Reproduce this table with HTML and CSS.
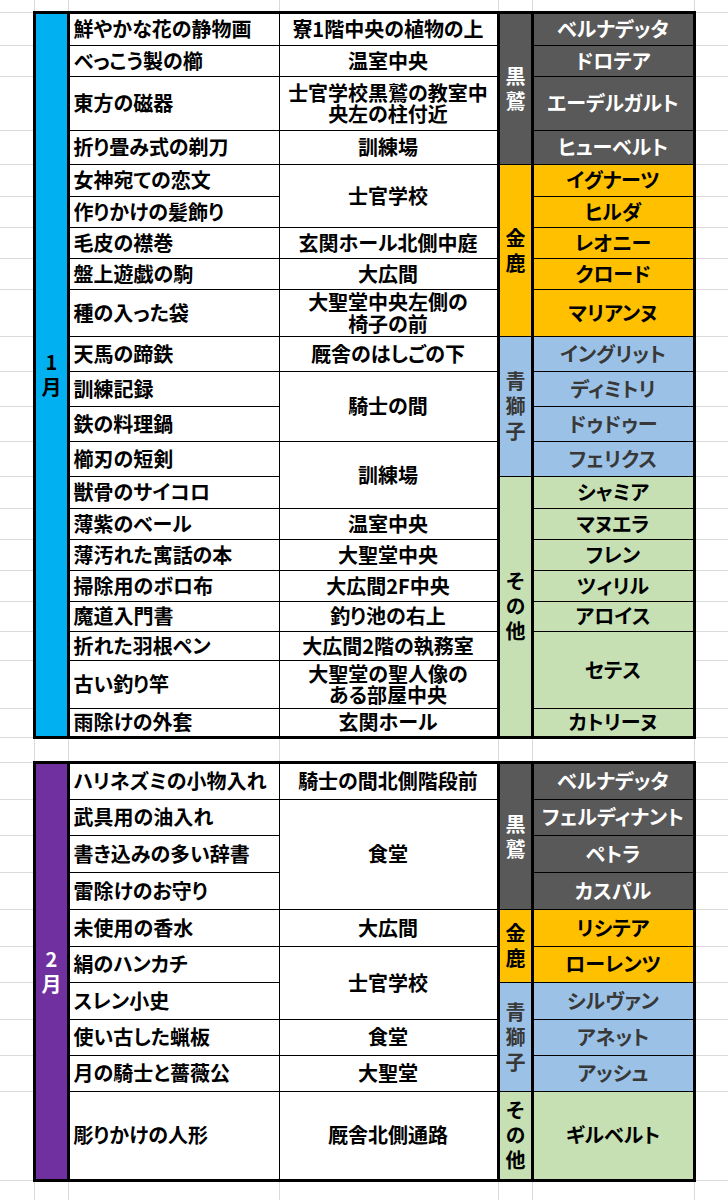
FILE: index.html
```html
<!DOCTYPE html>
<html lang="ja">
<head>
<meta charset="utf-8">
<title>落とし物一覧</title>
<link rel="stylesheet" href="styles.css">
</head>
<body>
<table class="sheet">
<colgroup>
<col class="c-a"><col class="c-b"><col class="c-c"><col class="c-d"><col class="c-e"><col class="c-f"><col class="c-g">
</colgroup>
<tbody>
<tr class="h12"><td class="g ga"></td><td class="g"></td><td class="g"></td><td class="g"></td><td class="g"></td><td class="g"></td><td class="g gg"></td></tr>

<tr class="h33"><td class="g ga"></td><td class="month m1" rowspan="21"><span class="stack">1月</span></td><td class="item t-top">鮮やかな花の静物画</td><td class="loc t-top">寮1階中央の植物の上</td><td class="house kuro t-top" rowspan="4"><span class="stack">黒鷲</span></td><td class="stu kuro t-top">ベルナデッタ</td><td class="g gg"></td></tr>
<tr class="h31"><td class="g ga"></td><td class="item">べっこう製の櫛</td><td class="loc">温室中央</td><td class="stu kuro">ドロテア</td><td class="g gg"></td></tr>
<tr class="h54"><td class="g ga"></td><td class="item">東方の磁器</td><td class="loc two">士官学校黒鷲の教室中
央左の柱付近</td><td class="stu kuro">エーデルガルト</td><td class="g gg"></td></tr>
<tr class="h34"><td class="g ga"></td><td class="item">折り畳み式の剃刀</td><td class="loc">訓練場</td><td class="stu kuro">ヒューベルト</td><td class="g gg"></td></tr>
<tr class="h32"><td class="g ga"></td><td class="item">女神宛ての恋文</td><td class="loc" rowspan="2">士官学校</td><td class="house kin" rowspan="5"><span class="stack">金鹿</span></td><td class="stu kin">イグナーツ</td><td class="g gg"></td></tr>
<tr class="h31"><td class="g ga"></td><td class="item">作りかけの髪飾り</td><td class="stu kin">ヒルダ</td><td class="g gg"></td></tr>
<tr class="h31"><td class="g ga"></td><td class="item">毛皮の襟巻</td><td class="loc">玄関ホール北側中庭</td><td class="stu kin">レオニー</td><td class="g gg"></td></tr>
<tr class="h31"><td class="g ga"></td><td class="item">盤上遊戯の駒</td><td class="loc">大広間</td><td class="stu kin">クロード</td><td class="g gg"></td></tr>
<tr class="h47"><td class="g ga"></td><td class="item">種の入った袋</td><td class="loc two">大聖堂中央左側の
椅子の前</td><td class="stu kin">マリアンヌ</td><td class="g gg"></td></tr>
<tr class="h35"><td class="g ga"></td><td class="item">天馬の蹄鉄</td><td class="loc">厩舎のはしごの下</td><td class="house ao" rowspan="4"><span class="stack">青獅子</span></td><td class="stu ao">イングリット</td><td class="g gg"></td></tr>
<tr class="h35"><td class="g ga"></td><td class="item">訓練記録</td><td class="loc" rowspan="2">騎士の間</td><td class="stu ao">ディミトリ</td><td class="g gg"></td></tr>
<tr class="h35"><td class="g ga"></td><td class="item">鉄の料理鍋</td><td class="stu ao">ドゥドゥー</td><td class="g gg"></td></tr>
<tr class="h35"><td class="g ga"></td><td class="item">櫛刃の短剣</td><td class="loc" rowspan="2">訓練場</td><td class="stu ao">フェリクス</td><td class="g gg"></td></tr>
<tr class="h32"><td class="g ga"></td><td class="item">獣骨のサイコロ</td><td class="house sono t-bot" rowspan="8"><span class="stack">その他</span></td><td class="stu sono">シャミア</td><td class="g gg"></td></tr>
<tr class="h31"><td class="g ga"></td><td class="item">薄紫のベール</td><td class="loc">温室中央</td><td class="stu sono">マヌエラ</td><td class="g gg"></td></tr>
<tr class="h31"><td class="g ga"></td><td class="item">薄汚れた寓話の本</td><td class="loc">大聖堂中央</td><td class="stu sono">フレン</td><td class="g gg"></td></tr>
<tr class="h31"><td class="g ga"></td><td class="item">掃除用のボロ布</td><td class="loc">大広間2F中央</td><td class="stu sono">ツィリル</td><td class="g gg"></td></tr>
<tr class="h30"><td class="g ga"></td><td class="item">魔道入門書</td><td class="loc">釣り池の右上</td><td class="stu sono">アロイス</td><td class="g gg"></td></tr>
<tr class="h29"><td class="g ga"></td><td class="item">折れた羽根ペン</td><td class="loc">大広間2階の執務室</td><td class="stu sono" rowspan="2">セテス</td><td class="g gg"></td></tr>
<tr class="h48"><td class="g ga"></td><td class="item">古い釣り竿</td><td class="loc two">大聖堂の聖人像の
ある部屋中央</td><td class="g gg"></td></tr>
<tr class="h29"><td class="g ga"></td><td class="item t-bot">雨除けの外套</td><td class="loc t-bot">玄関ホール</td><td class="stu sono t-bot">カトリーヌ</td><td class="g gg"></td></tr>

<tr class="h25"><td class="g ga"></td><td class="g"></td><td class="g"></td><td class="g"></td><td class="g"></td><td class="g"></td><td class="g gg"></td></tr>

<tr class="h37"><td class="g ga"></td><td class="month m2" rowspan="10"><span class="stack">2月</span></td><td class="item t-top">ハリネズミの小物入れ</td><td class="loc t-top">騎士の間北側階段前</td><td class="house kuro t-top" rowspan="4"><span class="stack">黒鷲</span></td><td class="stu kuro t-top">ベルナデッタ</td><td class="g gg"></td></tr>
<tr class="h36"><td class="g ga"></td><td class="item">武具用の油入れ</td><td class="loc" rowspan="3">食堂</td><td class="stu kuro">フェルディナント</td><td class="g gg"></td></tr>
<tr class="h37"><td class="g ga"></td><td class="item">書き込みの多い辞書</td><td class="stu kuro">ペトラ</td><td class="g gg"></td></tr>
<tr class="h37"><td class="g ga"></td><td class="item">雷除けのお守り</td><td class="stu kuro">カスパル</td><td class="g gg"></td></tr>
<tr class="h37"><td class="g ga"></td><td class="item">未使用の香水</td><td class="loc">大広間</td><td class="house kin" rowspan="2"><span class="stack">金鹿</span></td><td class="stu kin">リシテア</td><td class="g gg"></td></tr>
<tr class="h36"><td class="g ga"></td><td class="item">絹のハンカチ</td><td class="loc" rowspan="2">士官学校</td><td class="stu kin">ローレンツ</td><td class="g gg"></td></tr>
<tr class="h37"><td class="g ga"></td><td class="item">スレン小史</td><td class="house ao" rowspan="3"><span class="stack">青獅子</span></td><td class="stu ao">シルヴァン</td><td class="g gg"></td></tr>
<tr class="h36"><td class="g ga"></td><td class="item">使い古した蝋板</td><td class="loc">食堂</td><td class="stu ao">アネット</td><td class="g gg"></td></tr>
<tr class="h36"><td class="g ga"></td><td class="item">月の騎士と薔薇公</td><td class="loc">大聖堂</td><td class="stu ao">アッシュ</td><td class="g gg"></td></tr>
<tr class="h89"><td class="g ga"></td><td class="item t-bot">彫りかけの人形</td><td class="loc t-bot">厩舎北側通路</td><td class="house sono t-bot"><span class="stack">その他</span></td><td class="stu sono t-bot">ギルベルト</td><td class="g gg"></td></tr>

<tr class="h20"><td class="g ga gb"></td><td class="g gb"></td><td class="g gb"></td><td class="g gb"></td><td class="g gb"></td><td class="g gb"></td><td class="g gg gb"></td></tr>
</tbody>
</table>
</body>
</html>
```

FILE: styles.css
```css
html, body {
  margin: 0;
  padding: 0;
  background: #ffffff;
}

body {
  font-family: "Noto Sans CJK JP", "Noto Sans", sans-serif;
  font-weight: 700;
  font-size: 20px;
  color: #000;
  overflow: hidden;
}

.sheet {
  border-collapse: collapse;
  table-layout: fixed;
  width: 728px;
  font-feature-settings: "palt";
}

.c-a { width: 34px; }
.c-b { width: 34px; }
.c-c { width: 211px; }
.c-d { width: 219px; }
.c-e { width: 34px; }
.c-f { width: 162px; }
.c-g { width: 34px; }

.h12 { height: 12px; }
.h20 { height: 20px; }
.h25 { height: 25px; }
.h29 { height: 29px; }
.h30 { height: 30px; }
.h31 { height: 31px; }
.h32 { height: 32px; }
.h33 { height: 33px; }
.h34 { height: 34px; }
.h35 { height: 35px; }
.h36 { height: 36px; }
.h37 { height: 37px; }
.h47 { height: 47px; }
.h48 { height: 48px; }
.h54 { height: 54px; }
.h89 { height: 89px; }

td {
  padding: 0;
  border: 1px solid #000;
  vertical-align: middle;
  line-height: 22px;
  white-space: nowrap;
}

/* spreadsheet gridlines outside the data */
td.g {
  border: 1px solid #dadada;
}
td.ga { border-left: none; }
td.gg { border-right: none; }
.h12 td.g { border-top: none; }
td.gb { border-bottom: none; }

.item {
  text-align: left;
  padding-left: 4px;
}

.loc {
  text-align: center;
}

/* wrapped two-line cell text, broken where the spreadsheet breaks it */
.loc.two {
  white-space: pre-line;
  line-height: 21.5px;
}

.stu {
  text-align: center;
  border-right: 3px solid #000;
}

.house {
  text-align: center;
  border-left: 3px solid #000;
  border-right: 3px solid #000;
}

/* stacked (vertical) labels, one character per line like the spreadsheet */
.stack {
  display: inline-block;
  vertical-align: middle;
  writing-mode: vertical-rl;
  text-orientation: upright;
  font-feature-settings: normal;
  letter-spacing: 5px;
  line-height: 22px;
  padding-top: 5px;
}

.month {
  border: 3px solid #000;
  text-align: center;
}

.m1 { background: #00b0f0; color: #000; }
.m2 { background: #7030a0; color: #ffffff; }

.t-top { border-top: 3px solid #000; }
.t-bot { border-bottom: 3px solid #000; }

.kuro { background: #595959; color: #ffffff; }
.kin { background: #ffc000; color: #000; }
.ao { background: #9bc2e6; color: #383838; }
.sono { background: #c6e0b4; color: #000; }
```
